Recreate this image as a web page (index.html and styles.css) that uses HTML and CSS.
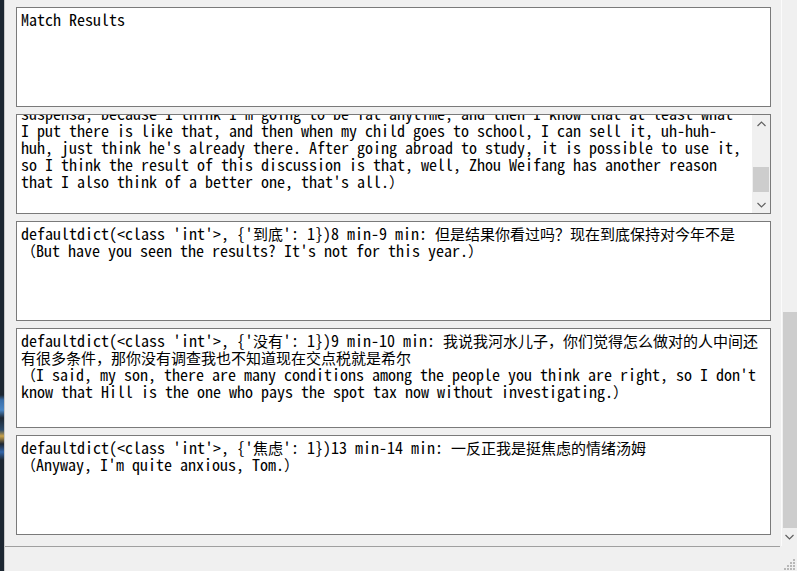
FILE: index.html
```html
<!DOCTYPE html>
<html>
<head>
<meta charset="utf-8">
<title>Match Results</title>
<link rel="stylesheet" href="styles.css">
</head>
<body>
<div class="screen">
  <div class="desk"></div>
  <div class="window">
    <div class="main">
      <div class="content">
        <div class="box">
          <div class="text">
            <div class="ln">Match Results</div>
          </div>
        </div>
        <div class="box">
          <div class="text">
            <div class="ln ln-scrolled">suspensa, because I think I'm going to be fat anytime, and then I know that at least what</div>
            <div class="ln">I put there is like that, and then when my child goes to school, I can sell it, uh-huh-</div>
            <div class="ln">huh, just think he's already there. After going abroad to study, it is possible to use it,</div>
            <div class="ln">so I think the result of this discussion is that, well, Zhou Weifang has another reason</div>
            <div class="ln">that I also think of a better one, that's all.<span class="zh">）</span></div>
          </div>
          <div class="mini-sb">
            <div class="arrow"><svg width="9" height="6" viewBox="0 0 9 6"><polyline points="0.5,5 4.5,1 8.5,5" fill="none" stroke="#606060" stroke-width="1.2"/></svg></div>
            <div class="mini-track"><div class="mini-thumb"></div></div>
            <div class="arrow"><svg width="9" height="6" viewBox="0 0 9 6"><polyline points="0.5,1 4.5,5 8.5,1" fill="none" stroke="#606060" stroke-width="1.2"/></svg></div>
          </div>
        </div>
        <div class="box">
          <div class="text">
            <div class="ln">defaultdict(&lt;class 'int'&gt;, {'<span class="zh">到底</span>': 1})8 min-9 min: <span class="zh">但是结果你看过吗？现在到底保持对今年不是</span></div>
            <div class="ln"><span class="zh">（</span>But have you seen the results? It's not for this year.<span class="zh">）</span></div>
          </div>
        </div>
        <div class="box">
          <div class="text">
            <div class="ln">defaultdict(&lt;class 'int'&gt;, {'<span class="zh">没有</span>': 1})9 min-10 min: <span class="zh">我说我河水儿子，你们觉得怎么做对的人中间还</span></div>
            <div class="ln"><span class="zh">有很多条件，那你没有调查我也不知道现在交点税就是希尔</span></div>
            <div class="ln"><span class="zh">（</span>I said, my son, there are many conditions among the people you think are right, so I don't</div>
            <div class="ln">know that Hill is the one who pays the spot tax now without investigating.<span class="zh">）</span></div>
          </div>
        </div>
        <div class="box">
          <div class="text">
            <div class="ln">defaultdict(&lt;class 'int'&gt;, {'<span class="zh">焦虑</span>': 1})13 min-14 min: <span class="zh">一反正我是挺焦虑的情绪汤姆</span></div>
            <div class="ln"><span class="zh">（</span>Anyway, I'm quite anxious, Tom.<span class="zh">）</span></div>
          </div>
        </div>
      </div>
      <div class="vsb">
        <div class="vsb-track"><div class="vsb-thumb"></div></div>
        <div class="arrow"><svg width="9" height="6" viewBox="0 0 9 6"><polyline points="0.5,1 4.5,5 8.5,1" fill="none" stroke="#606060" stroke-width="1.2"/></svg></div>
      </div>
    </div>
    <div class="status">
      <div class="status-main"></div>
      <div class="grip">
        <svg width="12" height="12" viewBox="0 0 12 12">
          <rect x="9" y="1" width="2" height="2" fill="#b8b8b8"/>
          <rect x="6" y="4" width="2" height="2" fill="#b8b8b8"/>
          <rect x="9" y="4" width="2" height="2" fill="#b8b8b8"/>
          <rect x="3" y="7" width="2" height="2" fill="#b8b8b8"/>
          <rect x="6" y="7" width="2" height="2" fill="#b8b8b8"/>
          <rect x="9" y="7" width="2" height="2" fill="#b8b8b8"/>
          <rect x="0" y="10" width="2" height="2" fill="#b8b8b8"/>
          <rect x="3" y="10" width="2" height="2" fill="#b8b8b8"/>
          <rect x="6" y="10" width="2" height="2" fill="#b8b8b8"/>
          <rect x="9" y="10" width="2" height="2" fill="#b8b8b8"/>
        </svg>
      </div>
    </div>
  </div>
</div>
</body>
</html>
```

FILE: styles.css
```css
html, body {
  margin: 0;
  padding: 0;
}

body {
  background: #f0f0f0;
  font-family: "Noto Sans Mono CJK SC", "Liberation Mono", monospace;
  color: #000;
}

.screen {
  display: flex;
  width: 797px;
  height: 571px;
  overflow: hidden;
}

.desk {
  width: 4px;
  flex: none;
  background: linear-gradient(to bottom,
    #1d2732 0px, #1d2732 395px,
    #3a6ea8 400px, #4a86c4 410px, #1d2732 418px,
    #2b4a6a 430px, #c9a24a 436px, #1d2732 444px,
    #3366aa 452px, #1d2732 460px,
    #1d2732 571px);
}

.window {
  flex: 1;
  display: flex;
  flex-direction: column;
  border-left: 1px solid #c8c8c8;
  background: #f0f0f0;
}

.main {
  display: flex;
  height: 546px;
}

.content {
  flex: 1;
  display: flex;
  flex-direction: column;
  gap: 7px;
  padding: 7px 10px 0 11px;
}

.box {
  height: 100px;
  flex: none;
  box-sizing: border-box;
  border: 1px solid #7a7a7a;
  background: #fff;
  display: flex;
  overflow: hidden;
}

.text {
  flex: 1;
  padding: 3px 4px;
  overflow: hidden;
}

.ln {
  height: 17px;
  line-height: 17px;
  font-size: 16px;
  white-space: pre;
}

.ln-scrolled {
  margin-top: -13px;
}

.zh {
  font-family: "Noto Sans CJK SC", sans-serif;
  font-size: 15px;
}

.mini-sb {
  width: 18px;
  flex: none;
  display: flex;
  flex-direction: column;
  background: #f0f0f0;
}

.arrow {
  height: 17px;
  flex: none;
  display: flex;
  align-items: center;
  justify-content: center;
}

.mini-track {
  flex: 1;
  padding-top: 35px;
}

.mini-thumb {
  height: 25px;
  margin: 0 1px;
  background: #cdcdcd;
}

.vsb {
  width: 15px;
  flex: none;
  display: flex;
  flex-direction: column;
  border-left: 1px solid #fbfbfb;
  background: #f0f0f0;
}

.vsb-track {
  flex: 1;
  display: flex;
  flex-direction: column;
  justify-content: flex-end;
}

.vsb-thumb {
  height: 216px;
  margin-left: 1px;
  background: #cdcdcd;
}

.vsb .arrow {
  height: 18px;
}

.status {
  height: 25px;
  display: flex;
}

.status-main {
  flex: 1;
  border-top: 1px solid #a0a0a0;
}

.grip {
  width: 16px;
  display: flex;
  align-items: flex-end;
  justify-content: flex-end;
  padding: 0 1px 1px 0;
}
```
